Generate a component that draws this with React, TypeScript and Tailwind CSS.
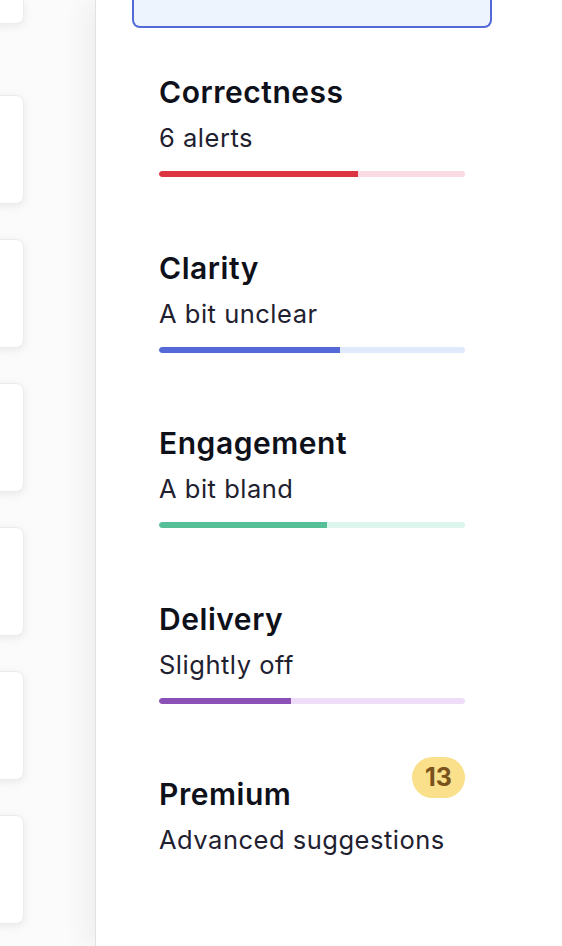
import React from 'react';

interface Metric {
  title: string;
  status: string;
  fill: number;
  bar: string;
  track: string;
}

const METRICS: Metric[] = [
  { title: 'Correctness', status: '6 alerts', fill: 65, bar: 'bg-[#dc3441]', track: 'bg-[#fbdbe3]' },
  { title: 'Clarity', status: 'A bit unclear', fill: 59, bar: 'bg-[#5468d8]', track: 'bg-[#e0eafc]' },
  { title: 'Engagement', status: 'A bit bland', fill: 55, bar: 'bg-[#56bf98]', track: 'bg-[#dcf5ed]' },
  { title: 'Delivery', status: 'Slightly off', fill: 43, bar: 'bg-[#8a50b6]', track: 'bg-[#efdcf8]' },
];

function MetricBlock({ m }: { m: Metric }) {
  return (
    <div className="flex flex-col">
      <h3 className="text-[30px] leading-[36px] font-semibold tracking-[0.018em] text-[#0e101a]">{m.title}</h3>
      <p className="mt-[12px] text-[25.5px] leading-[32px] tracking-[0.02em] text-[#1f2130]">{m.status}</p>
      <div className={`mt-[17px] h-[6px] w-full rounded-full overflow-hidden ${m.track}`}>
        <div className={`h-full rounded-l-full ${m.bar}`} style={{ width: `${m.fill}%` }} />
      </div>
    </div>
  );
}

export default function App() {
  return (
    <div
      className="flex h-[946px] w-[562px] overflow-hidden bg-white"
      style={{ fontFamily: 'Inter, "Noto Sans", sans-serif' }}
    >
      {/* Left: document cards, cut off at the edge */}
      <div className="w-[95px] shrink-0 overflow-hidden bg-[#fbfbfb] flex flex-col items-end pr-[71px]">
        <div className="h-[24px] w-[200px] shrink-0 rounded-b-lg bg-white border border-t-0 border-[#ececec] shadow-[0_2px_10px_rgba(0,0,0,0.08)]" />
        <div className="mt-[71px] flex flex-col gap-[35px]">
          {[0, 1, 2, 3, 4, 5].map((i) => (
            <div
              key={i}
              className="h-[109px] w-[200px] shrink-0 rounded-lg bg-white border border-[#ececec] shadow-[0_2px_10px_rgba(0,0,0,0.08)]"
            />
          ))}
        </div>
      </div>

      {/* Right: score sidebar */}
      <div className="flex-1 border-l border-[#e2e2e2] bg-white shadow-[-10px_0_24px_rgba(0,0,0,0.05)] pl-[36px] pr-[70px] flex flex-col">
        <div className="h-[28px] w-full rounded-b-lg border-2 border-t-0 border-[#5468d8] bg-[#eef4fe]" />

        <div className="px-[27px] pt-[46px] flex flex-col gap-[72.5px]">
          {METRICS.map((m) => (
            <MetricBlock key={m.title} m={m} />
          ))}

          <div className="relative flex flex-col">
            <span className="absolute right-0 top-[-19px] h-[41px] min-w-[53px] px-3 rounded-full bg-[#fae08b] text-[#7a521b] text-[25px] font-bold flex items-center justify-center">
              13
            </span>
            <h3 className="text-[30px] leading-[36px] font-semibold tracking-[0.018em] text-[#0e101a]">Premium</h3>
            <p className="mt-[12px] text-[25.5px] leading-[32px] tracking-[0.02em] text-[#1f2130]">Advanced suggestions</p>
          </div>
        </div>
      </div>
    </div>
  );
}
